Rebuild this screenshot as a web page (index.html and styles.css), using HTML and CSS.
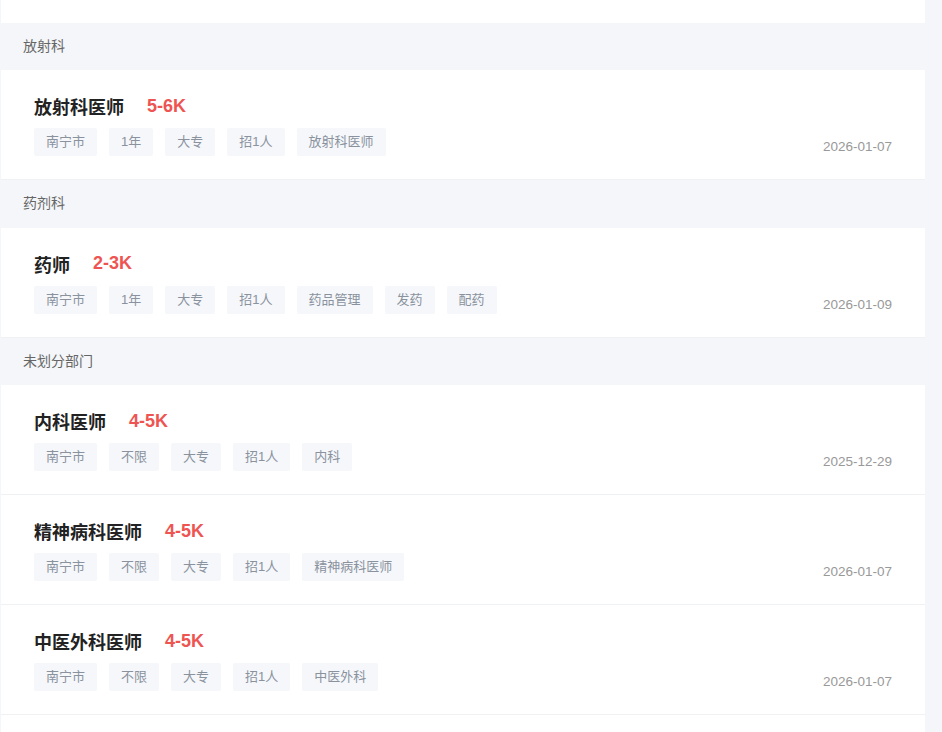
FILE: index.html
```html
<!DOCTYPE html>
<html lang="zh-CN">
<head>
<meta charset="utf-8">
<title>职位列表</title>
<link rel="stylesheet" href="styles.css">
</head>
<body>
<div class="list">
  <div class="top-card"></div>

  <div class="section-title">放射科</div>
  <div class="job">
    <div class="job-main">
      <div class="job-head"><span class="job-name">放射科医师</span><span class="salary">5-6K</span></div>
      <div class="tags"><span class="tag">南宁市</span><span class="tag">1年</span><span class="tag">大专</span><span class="tag">招1人</span><span class="tag">放射科医师</span></div>
    </div>
    <div class="date">2026-01-07</div>
  </div>

  <div class="section-title">药剂科</div>
  <div class="job">
    <div class="job-main">
      <div class="job-head"><span class="job-name">药师</span><span class="salary">2-3K</span></div>
      <div class="tags"><span class="tag">南宁市</span><span class="tag">1年</span><span class="tag">大专</span><span class="tag">招1人</span><span class="tag">药品管理</span><span class="tag">发药</span><span class="tag">配药</span></div>
    </div>
    <div class="date">2026-01-09</div>
  </div>

  <div class="section-title">未划分部门</div>
  <div class="job">
    <div class="job-main">
      <div class="job-head"><span class="job-name">内科医师</span><span class="salary">4-5K</span></div>
      <div class="tags"><span class="tag">南宁市</span><span class="tag">不限</span><span class="tag">大专</span><span class="tag">招1人</span><span class="tag">内科</span></div>
    </div>
    <div class="date">2025-12-29</div>
  </div>
  <div class="job">
    <div class="job-main">
      <div class="job-head"><span class="job-name">精神病科医师</span><span class="salary">4-5K</span></div>
      <div class="tags"><span class="tag">南宁市</span><span class="tag">不限</span><span class="tag">大专</span><span class="tag">招1人</span><span class="tag">精神病科医师</span></div>
    </div>
    <div class="date">2026-01-07</div>
  </div>
  <div class="job">
    <div class="job-main">
      <div class="job-head"><span class="job-name">中医外科医师</span><span class="salary">4-5K</span></div>
      <div class="tags"><span class="tag">南宁市</span><span class="tag">不限</span><span class="tag">大专</span><span class="tag">招1人</span><span class="tag">中医外科</span></div>
    </div>
    <div class="date">2026-01-07</div>
  </div>
  <div class="job job-last"></div>
</div>
</body>
</html>
```

FILE: styles.css
```css
html, body {
  margin: 0;
  padding: 0;
  background: #f4f6f9;
  height: 100%;
  overflow: hidden;
}
body {
  font-family: "Liberation Sans", "Noto Sans CJK SC", sans-serif;
}
.list {
  margin-left: 1px;
  width: 924px;
}
.top-card {
  height: 22.5px;
  background: #fff;
}
.section-title {
  height: 47.5px;
  line-height: 47.5px;
  padding-left: 22px;
  font-size: 14px;
  color: #666;
}
.job {
  display: flex;
  justify-content: space-between;
  align-items: flex-end;
  background: #fff;
  padding: 24px 33px 23px 33px;
  border-bottom: 1px solid #f0f1f3;
}
.job-last {
  height: 62px;
}
.job-head {
  display: flex;
  align-items: center;
  height: 24px;
  margin-bottom: 10px;
}
.job-name {
  font-size: 18px;
  font-weight: bold;
  color: #222;
}
.salary {
  margin-left: 23px;
  font-size: 18px;
  font-weight: bold;
  color: #ee5451;
}
.tags {
  display: flex;
  gap: 12px;
}
.tag {
  height: 28px;
  line-height: 28px;
  padding: 0 12px;
  background: #f5f7fa;
  color: #8a929e;
  font-size: 13px;
  border-radius: 2px;
}
.date {
  font-size: 13.5px;
  line-height: 18px;
  color: #999;
}
```
